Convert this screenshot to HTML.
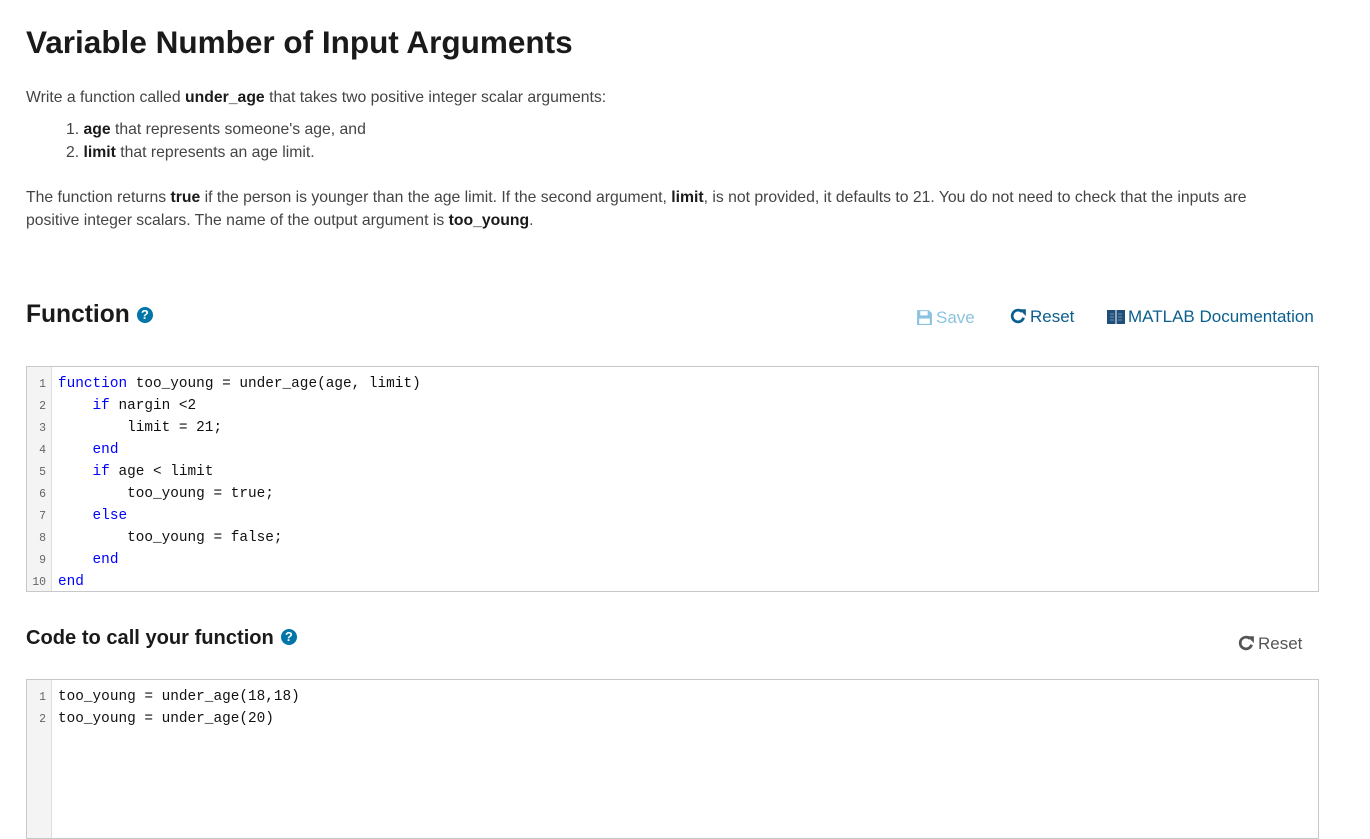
<!DOCTYPE html>
<html><head><meta charset="utf-8"><style>
*{margin:0;padding:0;box-sizing:border-box}
body{width:1370px;height:821px;overflow:hidden;background:#fff;font-family:"Liberation Sans",Arial,sans-serif;color:#444;position:relative}
.abs{position:absolute;white-space:nowrap}
h1{font-size:31.5px;font-weight:bold;color:#1a1a1a}
p{font-size:15.75px;color:#444}
b{color:#1a1a1a}
.h2{font-size:24.6px;font-weight:bold;color:#1a1a1a}
.h3{font-size:20.1px;font-weight:bold;color:#1a1a1a}
.q{display:inline-block;width:16px;height:16px;border-radius:50%;background:#0076a8;color:#fff;font-size:13px;text-align:center;line-height:16px;font-weight:bold;vertical-align:3px;margin-left:7px}
.ed{position:absolute;left:26px;width:1293px;border:1px solid #c8c8c8;background:#fff}
.gut{position:absolute;left:0;top:0;bottom:0;width:25px;background:#f4f4f4;border-right:1px solid #ddd}
.ln{position:absolute;left:0;width:19px;text-align:right;font-family:"Liberation Mono",monospace;font-size:11.5px;color:#666}
.cd{position:absolute;left:31px;font-family:"Liberation Mono",monospace;font-size:14.4px;color:#111;white-space:pre}
.k{color:#0000ff}
.btn{font-size:17px;color:#0b5f8e}
svg{vertical-align:-3px;margin-right:3px}
</style></head><body>
<h1 class="abs" style="left:26px;top:24px">Variable Number of Input Arguments</h1>
<p class="abs" style="left:26px;top:89px">Write a function called <b>under_age</b> that takes two positive integer scalar arguments:</p>
<p class="abs" style="left:66px;top:121px">1. <b>age</b> that represents someone's age, and</p>
<p class="abs" style="left:66px;top:144px">2. <b>limit</b> that represents an age limit.</p>
<p class="abs" style="left:26px;top:189px">The function returns <b>true</b> if the person is younger than the age limit. If the second argument, <b>limit</b>, is not provided, it defaults to 21. You do not need to check that the inputs are</p>
<p class="abs" style="left:26px;top:212px">positive integer scalars. The name of the output argument is <b>too_young</b>.</p>

<div class="abs h2" style="left:26px;top:301px">Function<span class="q">?</span></div>
<div class="abs btn" style="left:916px;top:308px;color:#8cc3e0"><svg width="17" height="17" viewBox="0 0 16 16"><path d="M1 1h11l3 3v11H1z" fill="#8cc3e0"/><rect x="4" y="2" width="7" height="4" fill="#fff"/><rect x="3" y="9" width="10" height="5" fill="#fff"/></svg>Save</div>
<div class="abs btn" style="left:1009px;top:307px"><svg width="18" height="18" viewBox="0 0 16 16"><path d="M13 9.5A5.2 5.2 0 1 1 11.6 4.2" fill="none" stroke="#0b5f8e" stroke-width="2.4"/><path d="M9 2h6v6z" fill="#0b5f8e"/></svg>Reset</div>
<div class="abs btn" style="left:1107px;top:307px"><svg width="18" height="16" viewBox="0 0 18 16"><rect x="0" y="1" width="18" height="14" fill="#1f4e79"/><path d="M9 1v14" stroke="#fff"/><path d="M3 5h4M3 8h4M3 11h4M11 5h4M11 8h4M11 11h4" stroke="#6f93b8"/></svg>MATLAB Documentation</div>

<div class="ed" style="top:366px;height:226px">
<div class="gut"></div>
<div class="ln" style="top:7px;line-height:22px">1<br>2<br>3<br>4<br>5<br>6<br>7<br>8<br>9<br>10</div>
<div class="cd" style="top:6px;line-height:22px"><span class="k">function</span> too_young = under_age(age, limit)
    <span class="k">if</span> nargin &lt;2
        limit = 21;
    <span class="k">end</span>
    <span class="k">if</span> age &lt; limit
        too_young = true;
    <span class="k">else</span>
        too_young = false;
    <span class="k">end</span>
<span class="k">end</span></div>
</div>

<div class="abs h3" style="left:26px;top:627px">Code to call your function<span class="q">?</span></div>
<div class="abs btn" style="left:1237px;top:634px;color:#555"><svg width="18" height="18" viewBox="0 0 16 16"><path d="M13 9.5A5.2 5.2 0 1 1 11.6 4.2" fill="none" stroke="#555" stroke-width="2.4"/><path d="M9 2h6v6z" fill="#555"/></svg>Reset</div>

<div class="ed" style="top:679px;height:160px">
<div class="gut"></div>
<div class="ln" style="top:7px;line-height:22px">1<br>2</div>
<div class="cd" style="top:6px;line-height:22px">too_young = under_age(18,18)
too_young = under_age(20)</div>
</div>
</body></html>
